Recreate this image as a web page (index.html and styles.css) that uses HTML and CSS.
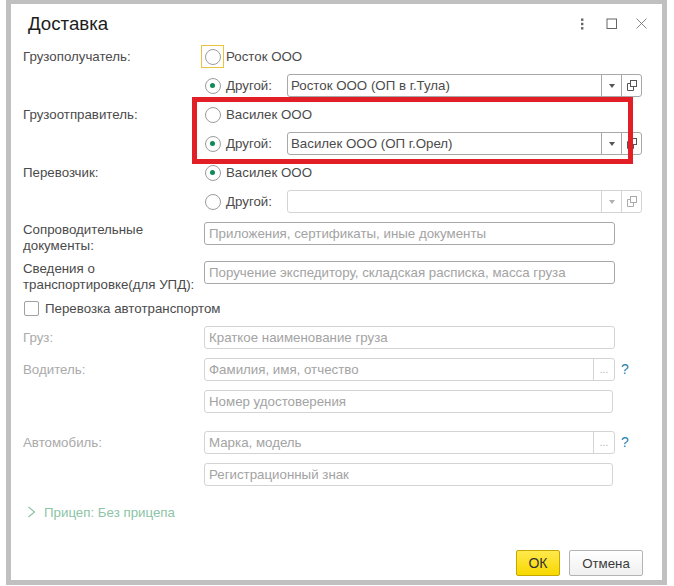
FILE: index.html
```html
<!DOCTYPE html>
<html lang="ru">
<head>
<meta charset="utf-8">
<title>Доставка</title>
<link rel="stylesheet" href="styles.css">
</head>
<body>
<div class="dialog">
  <header class="head">
    <h1 class="title">Доставка</h1>
    <div class="tools">
      <svg class="tool" width="16" height="16" viewBox="0 0 16 16"><g fill="#666"><rect x="7" y="2.5" width="2.4" height="2.4"/><rect x="7" y="6.8" width="2.4" height="2.4"/><rect x="7" y="11.1" width="2.4" height="2.4"/></g></svg>
      <svg class="tool" width="16" height="16" viewBox="0 0 16 16"><rect x="3" y="3" width="9.5" height="9.5" fill="none" stroke="#666"/></svg>
      <svg class="tool" width="16" height="16" viewBox="0 0 16 16"><path d="M2.5 2.5l10 10M12.5 2.5l-10 10" fill="none" stroke="#777" stroke-width=".9"/></svg>
    </div>
  </header>

  <div class="party">
    <div class="row">
      <span class="label">Грузополучатель:</span>
      <span class="radio-wrap focused"><span class="radio"></span></span>
      <span class="rtext">Росток ООО</span>
    </div>
    <div class="row">
      <span class="label"></span>
      <span class="radio-wrap"><span class="radio on"></span></span>
      <span class="rtext other">Другой:</span>
      <div class="combo">
        <span class="val">Росток ООО (ОП в г.Тула)</span>
        <span class="cell"><i class="caret"></i></span>
        <span class="cell"><svg width="13" height="13" viewBox="0 0 13 13"><rect x="5.5" y="1.5" width="6" height="6" fill="none" stroke="#555"/><path d="M5 4.5H2.500V11.500H8.500V8" fill="none" stroke="#555"/></svg></span>
      </div>
    </div>
    <div class="row">
      <span class="label">Грузоотправитель:</span>
      <span class="radio-wrap"><span class="radio"></span></span>
      <span class="rtext">Василек ООО</span>
    </div>
    <div class="row">
      <span class="label"></span>
      <span class="radio-wrap"><span class="radio on"></span></span>
      <span class="rtext other">Другой:</span>
      <div class="combo">
        <span class="val">Василек ООО (ОП г.Орел)</span>
        <span class="cell"><i class="caret"></i></span>
        <span class="cell"><svg width="13" height="13" viewBox="0 0 13 13"><rect x="5.5" y="1.5" width="6" height="6" fill="none" stroke="#555"/><path d="M5 4.5H2.500V11.500H8.500V8" fill="none" stroke="#555"/></svg></span>
      </div>
    </div>
    <div class="row">
      <span class="label">Перевозчик:</span>
      <span class="radio-wrap"><span class="radio on"></span></span>
      <span class="rtext">Василек ООО</span>
    </div>
    <div class="row">
      <span class="label"></span>
      <span class="radio-wrap"><span class="radio"></span></span>
      <span class="rtext other">Другой:</span>
      <div class="combo off">
        <span class="val"></span>
        <span class="cell"><i class="caret"></i></span>
        <span class="cell"><svg width="13" height="13" viewBox="0 0 13 13"><rect x="5.500" y="1.500" width="6" height="6" fill="none" stroke="#aaa"/><path d="M5 4.500H2.500V11.500H8.500V8" fill="none" stroke="#aaa"/></svg></span>
      </div>
    </div>
  </div>

  <div class="row docs">
    <span class="label two">Сопроводительные<br>документы:</span>
    <div class="field wide"><span class="ph">Приложения, сертификаты, иные документы</span></div>
  </div>
  <div class="row transp">
    <span class="label two">Сведения о<br>транспортировке(для УПД):</span>
    <div class="field wide"><span class="ph">Поручение экспедитору, складская расписка, масса груза</span></div>
  </div>

  <label class="check-row"><span class="check"></span><span>Перевозка автотранспортом</span></label>

  <div class="row cargo">
    <span class="label dim">Груз:</span>
    <div class="field wide off"><span class="ph">Краткое наименование груза</span></div>
  </div>
  <div class="row driver">
    <span class="label dim">Водитель:</span>
    <div class="field wide off pick"><span class="ph">Фамилия, имя, отчество</span><span class="dots">...</span></div>
    <span class="help">?</span>
  </div>
  <div class="row sub">
    <span class="label"></span>
    <div class="field narrow off"><span class="ph">Номер удостоверения</span></div>
  </div>
  <div class="row car">
    <span class="label dim">Автомобиль:</span>
    <div class="field wide off pick"><span class="ph">Марка, модель</span><span class="dots">...</span></div>
    <span class="help">?</span>
  </div>
  <div class="row sub">
    <span class="label"></span>
    <div class="field narrow off"><span class="ph">Регистрационный знак</span></div>
  </div>

  <div class="trailer">
    <svg width="12" height="14" viewBox="0 0 12 14"><path d="M3.500 2l6 5-6 5" fill="none" stroke="#8cc4a6" stroke-width="1.2"/></svg>
    <span>Прицеп: Без прицепа</span>
  </div>

  <footer class="actions">
    <button class="btn ok" type="button">ОК</button>
    <button class="btn cancel" type="button">Отмена</button>
  </footer>

  <div class="mark"></div>
</div>
</body>
</html>
```
FILE: styles.css
```css
* { box-sizing: border-box; }
html, body { margin: 0; padding: 0; background: #fff; }
body {
  width: 674px;
  height: 586px;
  overflow: hidden;
  padding-left: 6px;
  font-family: "Liberation Sans", Arial, sans-serif;
  font-size: 13.3px;
  color: #4b4b4b;
}
.dialog {
  position: relative;
  width: 661px;
  height: 585px;
  border: solid #c0c0c0;
  border-width: 4px 5px 5px;
  background: #fff;
}
.head {
  display: flex;
  align-items: center;
  justify-content: space-between;
  height: 41px;
  padding: 0 12px 1px 17px;
}
.title { margin: 0; font-size: 18.7px; font-weight: 400; color: #1d1d1d; }
.tools { display: flex; gap: 14px; }
.party { display: flex; flex-direction: column; gap: 6px; }
.row { display: flex; align-items: center; height: 23px; }
.label { flex: none; width: 193px; padding-left: 12px; color: #4b4b4b; }
.label.two { line-height: 16px; align-self: flex-start; }
.label.dim { color: #aaa; }
.radio-wrap {
  flex: none;
  display: flex;
  align-items: center;
  justify-content: center;
  width: 23px;
  height: 23px;
  margin-left: -3px;
  border: 1px solid transparent;
}
.radio-wrap.focused { border-color: #e8c33c; }
.radio {
  width: 16px;
  height: 16px;
  border: 1px solid #9c9c9c;
  border-radius: 50%;
  position: relative;
  display: block;
}
.radio.on::after {
  content: "";
  position: absolute;
  left: 4.5px;
  top: 4.5px;
  width: 5px;
  height: 5px;
  border-radius: 50%;
  background: #0f8a55;
}
.rtext { margin-left: 2px; }
.rtext.other { width: 61px; flex: none; }
.combo {
  display: flex;
  align-items: stretch;
  width: 355px;
  height: 23px;
  border: 1px solid #a8a8a8;
  border-radius: 3px;
}
.val { flex: 1; padding: 0 3px; line-height: 21px; }
.cell {
  flex: none;
  width: 20px;
  display: flex;
  align-items: center;
  justify-content: center;
  border-left: 1px solid #a8a8a8;
}
.caret {
  width: 0;
  height: 0;
  border: 3.5px solid transparent;
  border-top: 4px solid #555;
  border-bottom: 0;
}
.combo.off, .combo.off .cell { border-color: #d4d4d4; }
.combo.off .caret { border-top-color: #b0b0b0; }
.docs { margin-top: 9px; }
.transp { margin-top: 16px; }
.field {
  flex: none;
  display: flex;
  align-items: stretch;
  height: 23px;
  border: 1px solid #a8a8a8;
  border-radius: 3px;
  line-height: 21px;
}
.field.off { border-color: #d4d4d4; }
.field.wide { width: 411px; }
.field.narrow { width: 409px; }
.ph { flex: 1; padding: 0 4px; color: #a3a3a3; }
.dots {
  flex: none;
  width: 21px;
  border-left: 1px solid #d4d4d4;
  text-align: center;
  color: #b0b0b0;
  font-size: 10px;
}
.check-row {
  display: flex;
  align-items: center;
  gap: 6px;
  height: 23px;
  margin: 13px 0 0 13px;
}
.check {
  width: 15px;
  height: 15px;
  border: 1px solid #a0a0a0;
  border-radius: 2px;
}
.cargo { margin-top: 6px; }
.driver { margin-top: 9px; }
.sub { margin-top: 9px; }
.car { margin-top: 18px; }
.help { margin-left: 6px; color: #2a7fb0; font-size: 14px; margin-top: -2px; }
.trailer {
  display: flex;
  align-items: center;
  gap: 7px;
  margin: 16px 0 0 14px;
  color: #8cc4a6;
  height: 20px;
}
.actions {
  display: flex;
  justify-content: flex-end;
  gap: 9px;
  margin-top: 28px;
  padding-right: 19px;
}
.btn {
  height: 26px;
  padding: 0;
  font: inherit;
  font-size: 13.3px;
  border-radius: 2px;
  color: #3a3a3a;
}
.ok {
  width: 44px;
  font-size: 14px;
  background: linear-gradient(#ffe94d, #f8d800);
  border: 1px solid #c4a800;
  color: #333;
}
.cancel {
  width: 74px;
  background: linear-gradient(#fff, #f0f0f0);
  border: 1px solid #b4b4b4;
}
.mark {
  position: absolute;
  left: 181px;
  top: 93px;
  width: 441px;
  height: 67px;
  border: 5px solid #e21f26;
}
```
